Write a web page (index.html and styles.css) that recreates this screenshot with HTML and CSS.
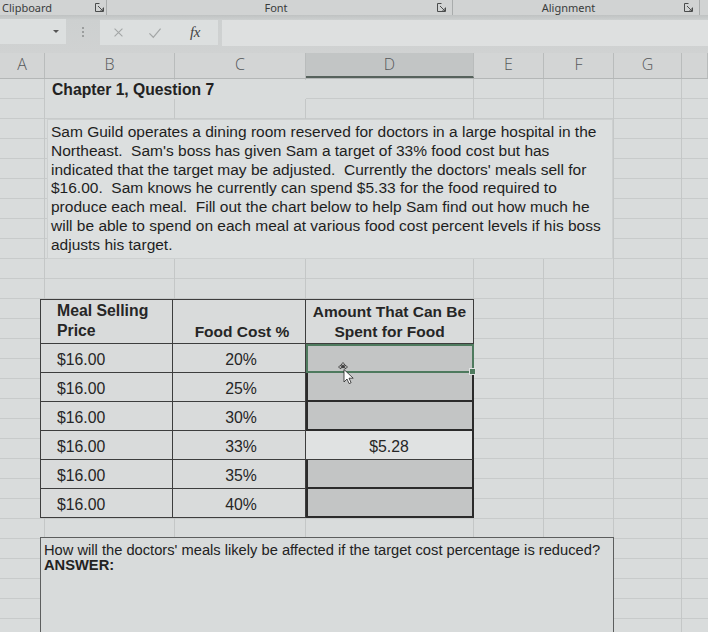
FILE: index.html
```html
<!DOCTYPE html>
<html>
<head>
<meta charset="utf-8">
<link rel="stylesheet" href="styles.css">
</head>
<body>
<div class="ribbon">
  <div class="grp grp1"><span class="glabel clip">Clipboard</span><svg class="launch" viewBox="0 0 9 9"><path d="M0.5 0.5h4M0.5 0.5v8h8v-4M3 3l5 5M8 5v3h-3"/></svg></div>
  <div class="grp grp2"><span class="glabel">Font</span><svg class="launch" viewBox="0 0 9 9"><path d="M0.5 0.5h4M0.5 0.5v8h8v-4M3 3l5 5M8 5v3h-3"/></svg></div>
  <div class="grp grp3"><span class="glabel">Alignment</span><svg class="launch" viewBox="0 0 9 9"><path d="M0.5 0.5h4M0.5 0.5v8h8v-4M3 3l5 5M8 5v3h-3"/></svg></div>
</div>
<div class="fbar">
  <div class="namebox"><span class="dd"></span></div>
  <div class="grip"><i></i><i></i><i></i></div>
  <div class="fxbox">
    <svg class="ic x" viewBox="0 0 14 14"><path d="M2 2l10 10M12 2L2 12"/></svg>
    <svg class="ic ok" viewBox="0 0 16 14"><path d="M1.5 7.5l4.5 4.5L14.5 2"/></svg>
    <span class="fx">fx</span>
  </div>
  <div class="finput"></div>
</div>
<div class="colhdr">
  <div class="ch">A</div><div class="ch">B</div><div class="ch">C</div><div class="ch sel">D</div><div class="ch">E</div><div class="ch">F</div><div class="ch">G</div><div class="ch"></div>
</div>
<div class="sheet">
  <div class="title">Chapter 1, Question 7</div>
  <div class="story">Sam Guild operates a dining room reserved for doctors in a large hospital in the<br>Northeast.&nbsp; Sam's boss has given Sam a target of 33% food cost but has<br>indicated that the target may be adjusted.&nbsp; Currently the doctors' meals sell for<br>$16.00.&nbsp; Sam knows he currently can spend $5.33 for the food required to<br>produce each meal.&nbsp; Fill out the chart below to help Sam find out how much he<br>will be able to spend on each meal at various food cost percent levels if his boss<br>adjusts his target.</div>
  <div class="chart">
    <div class="h h1">Meal Selling<br>Price</div>
    <div class="h h2">Food Cost %</div>
    <div class="h h3">Amount That Can Be<br>Spent for Food</div>

    <div class="c p">$16.00</div><div class="c pc">20%</div><div class="c amt blank selcell"><span class="handle"></span><svg class="cursor" viewBox="0 0 18 22"><g fill="#fff" stroke="#222" stroke-width="0.8" stroke-linejoin="round"><path d="M5 0.5l1.8 2.3h-1.2v2.4h-1.2V2.8H3.2z"/><path d="M0.5 5l2.3-1.8v1.2h2.4v1.2H2.8v1.2z"/><path d="M9.5 5L7.2 3.2v1.2H5.4v1.2h1.8v1.2z"/><path d="M6 7.5v12.5l3-3 2.1 4.6 2-0.9-2.1-4.5h4.2z"/></g></svg></div>
    <div class="c p">$16.00</div><div class="c pc">25%</div><div class="c amt blank"></div>
    <div class="c p">$16.00</div><div class="c pc">30%</div><div class="c amt blank"></div>
    <div class="c p">$16.00</div><div class="c pc">33%</div><div class="c amt filled">$5.28</div>
    <div class="c p">$16.00</div><div class="c pc">35%</div><div class="c amt blank"></div>
    <div class="c p">$16.00</div><div class="c pc">40%</div><div class="c amt blank last"></div>
  </div>
  <div class="answer">How will the doctors' meals likely be affected if the target cost percentage is reduced?<br><b>ANSWER:</b></div>
</div>
</body>
</html>
```
FILE: styles.css
```css
html, body {
  margin: 0;
  padding: 0;
}
body {
  width: 708px;
  height: 632px;
  overflow: hidden;
  background: #d9dcdc;
  font-family: "Liberation Sans", Arial, sans-serif;
  color: #222;
}

/* ribbon group labels */
.ribbon {
  display: flex;
  height: 15px;
  overflow: hidden;
  background: #d1d3d3;
  font-family: "Noto Sans", sans-serif;
  font-size: 11px;
  color: #3a3c3c;
}
.grp {
  display: flex;
  align-items: center;
  box-sizing: border-box;
  border-right: 1px solid #a9acac;
  height: 15px;
}
.grp1 { width: 107px; padding-right: 2px; }
.grp2 { width: 346px; padding-right: 6px; }
.grp3 { width: 247px; padding-right: 6px; }
.glabel {
  flex: 1;
  text-align: center;
  line-height: 15px;
}
.grp2 .glabel { padding-left: 8px; }
.glabel.clip {
  text-align: left;
  margin-top: -1px;
  padding-left: 2px;
}
.launch {
  width: 9px;
  height: 9px;
  fill: none;
  stroke: #4a4c4c;
  stroke-width: 1;
}

/* formula bar */
.fbar {
  display: flex;
  align-items: flex-start;
  height: 38px;
  box-sizing: border-box;
  padding-top: 4px;
  background: linear-gradient(#bfc2c2 0, #cdd0d0 5px, #d0d2d2 100%);
}
.namebox {
  position: relative;
  width: 66px;
  height: 25px;
  background: #dcdfdf;
}
.dd {
  position: absolute;
  right: 7px;
  top: 11px;
  border-left: 3px solid transparent;
  border-right: 3px solid transparent;
  border-top: 3px solid #555;
}
.grip {
  width: 34px;
  height: 25px;
  display: flex;
  flex-direction: column;
  align-items: center;
  justify-content: center;
  gap: 2px;
}
.grip i {
  width: 2px;
  height: 2px;
  background: #8a8c8c;
  border-radius: 1px;
}
.fxbox {
  width: 118px;
  height: 25px;
  margin-top: 1px;
  background: #dcdfdf;
  display: flex;
  align-items: center;
}
.ic {
  fill: none;
  stroke: #a3a6a6;
  stroke-width: 1.4;
}
.ic.x { width: 11px; height: 11px; margin-left: 13px; }
.ic.ok { width: 14px; height: 12px; margin-left: 24px; }
.fx {
  margin-left: 28px;
  font-family: "Liberation Serif", serif;
  font-style: italic;
  font-size: 15px;
  color: #444;
  letter-spacing: -0.5px;
}
.finput {
  flex: 1;
  height: 26px;
  margin-left: 4px;
  margin-top: 1px;
  background: #dee0e0;
}

/* column headers */
.colhdr {
  display: grid;
  grid-template-columns: 45px 130px 131px 168px 70px 70px 68px 1fr;
  height: 26px;
  background: #d3d5d5;
  border-bottom: 1px solid #b4b7b7;
  box-sizing: border-box;
}
.ch {
  border-right: 1px solid #b9bcbc;
  display: flex;
  align-items: center;
  justify-content: center;
  padding-bottom: 3px;
  font-family: "Open Sans", sans-serif;
  font-weight: 300;
  font-size: 16px;
  color: #55585a;
}
.ch.sel {
  background: #c2c5c5;
  border-bottom: 2px solid #56625c;
  padding-bottom: 1px;
}

/* sheet */
.sheet {
  display: grid;
  grid-template-columns: 45px 130px 131px 168px 70px 70px 68px 1fr;
  grid-template-rows: repeat(28, 20px);
  background:
    linear-gradient(#c4c7c7, #c4c7c7) 44px 0 / 1px 100% no-repeat,
    linear-gradient(#c4c7c7, #c4c7c7) 174px 0 / 1px 100% no-repeat,
    linear-gradient(#c4c7c7, #c4c7c7) 305px 0 / 1px 100% no-repeat,
    linear-gradient(#c4c7c7, #c4c7c7) 473px 0 / 1px 100% no-repeat,
    linear-gradient(#c4c7c7, #c4c7c7) 543px 0 / 1px 100% no-repeat,
    linear-gradient(#c4c7c7, #c4c7c7) 613px 0 / 1px 100% no-repeat,
    linear-gradient(#c4c7c7, #c4c7c7) 681px 0 / 1px 100% no-repeat,
    repeating-linear-gradient(to bottom, transparent 0 19px, #c8cbcb 19px 20px);
}
.title {
  grid-column: 2 / 4;
  grid-row: 1;
  align-self: center;
  padding-left: 7px;
  font-weight: bold;
  font-size: 15.7px;
  background: #d9dcdc;
  height: 19px;
  line-height: 19px;
}
.story {
  grid-column: 2 / 7;
  grid-row: 3 / 10;
  margin-left: 2px;
  margin-right: 1px;
  background: #dcdfdf;
  border: 1px solid #cdd0d0;
  padding: 3px 0 0 3px;
  font-size: 15.5px;
  line-height: 18.8px;
  white-space: nowrap;
  color: #1e1e1e;
}

/* chart */
.chart {
  grid-column: 2 / 5;
  grid-row: 12 / 23;
  margin-left: -5px;
  width: 433px;
  display: grid;
  grid-template-columns: 132px 133px 168px;
  grid-template-rows: 44px repeat(6, 29px);
  border-top: 1px solid #3d3d3d;
  border-left: 1px solid #3d3d3d;
  background: #d9dbdb;
  font-size: 15.8px;
  color: #262626;
  align-self: start;
}
.h, .c {
  border-right: 1px solid #3d3d3d;
  border-bottom: 1px solid #3d3d3d;
  box-sizing: border-box;
}
.h {
  font-weight: bold;
  line-height: 20px;
  display: flex;
  align-items: flex-end;
  padding-bottom: 1px;
}
.h1 { padding-left: 16px; padding-bottom: 2px; }
.h2 { justify-content: center; padding-left: 6px; font-size: 15.5px; }
.h3 { justify-content: center; text-align: center; font-size: 15.5px; }
.c {
  display: flex;
  align-items: center;
  padding-top: 3px;
}
.p { padding-left: 16px; }
.pc { justify-content: center; padding-left: 4px; }
.amt {
  position: relative;
  justify-content: center;
}
.blank {
  background: #c3c5c5;
  border: 2px solid #2b2b2b;
  border-top: none;
}
.filled {
  background: #e0e2e2;
  border-right: 2px solid #2b2b2b;
}
.selcell {
  border: 2px solid #4e7a5e;
  z-index: 2;
}
.handle {
  position: absolute;
  right: -4px;
  bottom: -4px;
  width: 5px;
  height: 5px;
  background: #4e7a5e;
  border: 1px solid #e0e2e2;
}
.cursor {
  position: absolute;
  left: 30px;
  top: 16px;
  width: 18px;
  height: 22px;
}

/* answer box */
.answer {
  grid-column: 2 / 7;
  grid-row: 24 / 29;
  margin-left: -5px;
  margin-top: -2px;
  background: #d8dbdb;
  border: 1px solid #5c5e5e;
  border-bottom: none;
  padding: 5px 0 0 3px;
  font-size: 14.7px;
  line-height: 15px;
  white-space: nowrap;
  color: #222;
}
```
